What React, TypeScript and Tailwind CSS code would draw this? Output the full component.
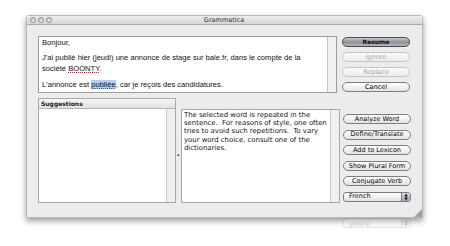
import React from "react";

const lucida = { fontFamily: '"DejaVu Sans", "Liberation Sans", sans-serif' };
const helv = { fontFamily: '"Liberation Sans", Arial, sans-serif' };

function Btn({ label, variant = "normal" }: { label: string; variant?: "default" | "disabled" | "normal" }) {
  const base =
    "h-[10px] w-[68px] rounded-full flex items-center justify-center text-[6.5px] leading-none border";
  if (variant === "default")
    return (
      <div
        className={`${base} border-[#4a4a4a] bg-gradient-to-b from-[#c9ccd0] via-[#8d9096] to-[#b4b7bb] text-[#111] font-bold`}
        style={{ ...lucida, fontSize: "6px" }}
      >
        {label}
      </div>
    );
  if (variant === "disabled")
    return (
      <div
        className={`${base} border-[#c4c4c4] bg-gradient-to-b from-[#fbfbfb] to-[#ececec] text-[#a8a8a8]`}
        style={lucida}
      >
        {label}
      </div>
    );
  return (
    <div
      className={`${base} border-[#7d7d7d] bg-gradient-to-b from-[#ffffff] via-[#f2f2f2] to-[#e2e2e2] text-[#000]`}
      style={lucida}
    >
      {label}
    </div>
  );
}

function Popup() {
  return (
    <div
      className="h-[10px] w-[68px] rounded-[3px] border border-[#7d7d7d] bg-gradient-to-b from-[#ffffff] to-[#e4e4e4] flex items-center justify-between pl-[5px] text-[6.5px] text-[#000] overflow-hidden"
      style={lucida}
    >
      <span>French</span>
      <span className="h-full w-[9px] bg-gradient-to-b from-[#d8dde6] to-[#9aa3b2] border-l border-[#7d7d7d] flex flex-col items-center justify-center text-[4px] leading-[4px]">
        <span>▲</span>
        <span>▼</span>
      </span>
    </div>
  );
}

export default function App() {
  return (
    <div className="w-[450px] h-[246px] bg-white overflow-hidden relative">
      <div className="pt-[15px] pl-[26px]">
        <div className="relative w-[397px] h-[203px] bg-[#ececec] border border-[#b8b8b8] rounded-t-[3px] shadow-[0_3px_6px_rgba(0,0,0,0.4)] flex flex-col">
          {/* title bar */}
          <div className="h-[9px] bg-gradient-to-b from-[#ececec] to-[#d6d6d6] border-b border-[#a9a9a9] flex items-center relative">
            <div className="flex gap-[2px] pl-[3px]">
              <span className="w-[6px] h-[6px] rounded-full border border-[#8c8c8c] bg-gradient-to-b from-[#c8c8c8] to-[#f4f4f4]" />
              <span className="w-[6px] h-[6px] rounded-full border border-[#8c8c8c] bg-gradient-to-b from-[#c8c8c8] to-[#f4f4f4]" />
              <span className="w-[6px] h-[6px] rounded-full border border-[#8c8c8c] bg-gradient-to-b from-[#c8c8c8] to-[#f4f4f4]" />
            </div>
            <div className="flex-1 text-center text-[6.5px] leading-none text-[#333] pr-[26px]" style={lucida}>
              Grammatica
            </div>
          </div>

          {/* top row */}
          <div className="flex pl-[11px] pt-[11px]">
            <div className="w-[299px] h-[57px] bg-white border border-[#9c9c9c] flex">
              <div className="flex-1 pl-[3px] pt-[1px] text-[7.6px] leading-[10.5px] text-[#111]" style={helv}>
                <div>Bonjour,</div>
                <div className="h-[4.5px]" />
                <div>J'ai publié hier (jeudi) une annonce de stage sur bale.fr, dans le compte de la</div>
                <div>
                  société{" "}
                  <span className="underline decoration-dotted decoration-[#d02020] decoration-[1.2px] underline-offset-[1px]">
                    BOONTY
                  </span>
                  .
                </div>
                <div className="h-[6px]" />
                <div>
                  L'annonce est{" "}
                  <span className="bg-[#b6cff0] underline decoration-dotted decoration-[#2050d0] decoration-[1.2px] underline-offset-[1px]">
                    publiée
                  </span>
                  , car je reçois des candidatures.
                </div>
              </div>
              <div className="w-[9px] h-full bg-[#f0f0f0] border-l border-[#c4c4c4]" />
            </div>
            <div className="ml-[5px] pt-[1px] flex flex-col gap-[5px]">
              <Btn label="Resume" variant="default" />
              <Btn label="Ignore" variant="disabled" />
              <Btn label="Replace" variant="disabled" />
              <Btn label="Cancel" />
            </div>
          </div>

          {/* bottom row */}
          <div className="flex pl-[11px] pt-[5px]">
            <div className="w-[138px] h-[105px] border border-[#a8a8a8] bg-white flex flex-col">
              <div
                className="h-[10px] bg-gradient-to-b from-[#f6f6f6] to-[#e2e2e2] border-b border-[#b4b4b4] pl-[2px] text-[6px] leading-[10px] font-bold text-[#222]"
                style={lucida}
              >
                Suggestions
              </div>
              <div className="flex-1 flex">
                <div className="flex-1" />
                <div className="w-[9px] bg-[#f0f0f0] border-l border-[#c8c8c8]" />
              </div>
            </div>
            <div className="w-[5px] flex items-center justify-center text-[5px] text-[#555] pt-[8px]">▴</div>
            <div className="mt-[11px] w-[159px] h-[94px] border border-[#a8a8a8] bg-white flex">
              <div className="flex-1 pl-[2px] pt-[1px] text-[6.9px] leading-[8.2px] text-[#111] whitespace-nowrap" style={lucida}>
                <div>The selected word is repeated in the</div>
                <div>sentence.&nbsp; For reasons of style, one often</div>
                <div>tries to avoid such repetitions.&nbsp; To vary</div>
                <div>your word choice, consult one of the</div>
                <div>dictionaries.</div>
              </div>
              <div className="w-[9px] bg-[#f0f0f0] border-l border-[#c8c8c8]" />
            </div>
            <div className="ml-[3px] pt-[16px] flex flex-col gap-[5.6px]">
              <Btn label="Analyze Word" />
              <Btn label="Define/Translate" />
              <Btn label="Add to Lexicon" />
              <Btn label="Show Plural Form" />
              <Btn label="Conjugate Verb" />
              <Popup />
            </div>
          </div>

          {/* resize grip */}
          <div className="absolute right-0 bottom-0 w-0 h-0 border-l-[8px] border-l-transparent border-b-[8px] border-b-[#a0a0a0]" />
        </div>

        {/* reflection */}
        <div className="pl-[317px] pt-[15px] opacity-20 -scale-y-100">
          <Popup />
        </div>
      </div>
    </div>
  );
}
